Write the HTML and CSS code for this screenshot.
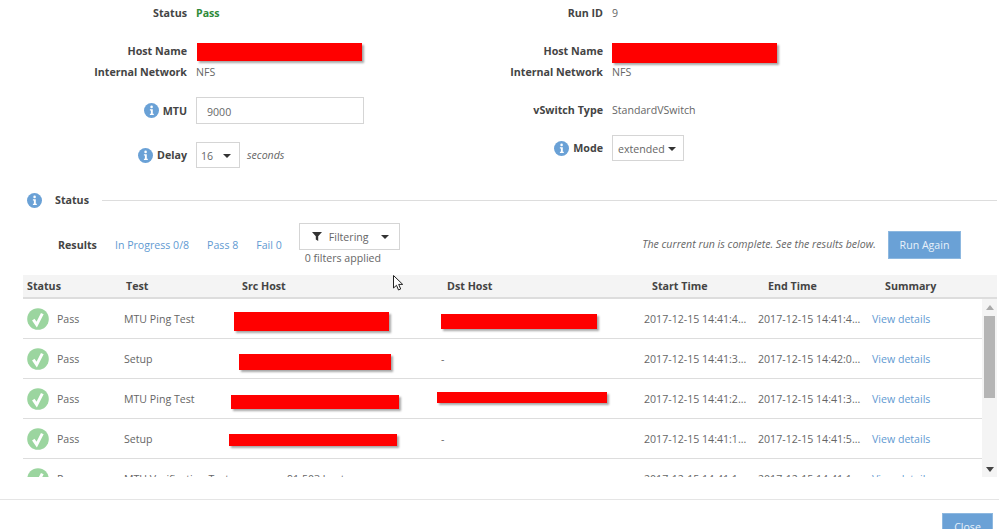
FILE: index.html
```html
<!DOCTYPE html>
<html lang="en">
<head>
<meta charset="utf-8">
<title>Run details</title>
<link rel="stylesheet" href="styles.css">
</head>
<body>
<svg class="defs" width="0" height="0" aria-hidden="true">
  <symbol id="info" viewBox="0 0 15 15"><circle cx="7.5" cy="7.5" r="7.5" fill="#6aa1d6"/><circle cx="7.6" cy="3.9" r="1.3" fill="#fff"/><path d="M5.9 6.2h2.9v4.6h1v1.2H5.9v-1.2h1V7.4h-1z" fill="#fff"/></symbol>
  <symbol id="ok" viewBox="0 0 22 22"><circle cx="11" cy="11" r="10.8" fill="#9bd59f"/><path d="M6.3 11.6l3.4 5 5.6-11" fill="none" stroke="#fff" stroke-width="3"/></symbol>
</svg>
<main class="page">
  <section class="form">
    <div class="col col-left">
      <div class="row"><span class="label">Status</span><span class="pass">Pass</span></div>
      <div class="row host"><span class="label">Host Name</span><span class="value"></span></div>
      <div class="row net"><span class="label">Internal Network</span><span class="value">NFS</span></div>
      <div class="row mtu"><span class="label"><svg class="i"><use href="#info"/></svg>MTU</span><span class="input">9000</span></div>
      <div class="row delay"><span class="label"><svg class="i"><use href="#info"/></svg>Delay</span><span class="select small">16<b class="caret"></b></span><em class="value unit">seconds</em></div>
    </div>
    <div class="col col-right">
      <div class="row"><span class="label">Run ID</span><span class="value">9</span></div>
      <div class="row host"><span class="label">Host Name</span><span class="value"></span></div>
      <div class="row net"><span class="label">Internal Network</span><span class="value">NFS</span></div>
      <div class="row type"><span class="label">vSwitch Type</span><span class="value">StandardVSwitch</span></div>
      <div class="row mode"><span class="label"><svg class="i"><use href="#info"/></svg>Mode</span><span class="select wide">extended<b class="caret tight"></b></span></div>
    </div>
  </section>

  <div class="section-head"><svg class="i"><use href="#info"/></svg><strong>Status</strong><span class="rule"></span></div>

  <div class="toolbar">
    <strong class="results">Results</strong>
    <a class="link">In Progress 0/8</a>
    <a class="link">Pass 8</a>
    <a class="link">Fail 0</a>
    <div class="filter">
      <button class="filter-btn"><svg class="funnel" viewBox="0 0 10 9"><path d="M0 0h10L6.2 4.2V9L3.8 7.6V4.2z" fill="#333"/></svg>Filtering<b class="caret"></b></button>
      <span class="filter-note">0 filters applied</span>
    </div>
    <em class="run-note">The current run is complete. See the results below.</em>
    <button class="run">Run Again</button>
  </div>

  <div class="thead">
    <span>Status</span><span>Test</span><span>Src Host</span><span>Dst Host</span><span>Start Time</span><span>End Time</span><span>Summary</span>
  </div>
  <div class="tbody">
    <div class="rows">
      <div class="tr"><svg class="ok"><use href="#ok"/></svg><span>Pass</span><span>MTU Ping Test</span><span></span><span></span><span>2017-12-15 14:41:4...</span><span>2017-12-15 14:41:4...</span><a class="link">View details</a></div>
      <div class="tr"><svg class="ok"><use href="#ok"/></svg><span>Pass</span><span>Setup</span><span></span><span>-</span><span>2017-12-15 14:41:3...</span><span>2017-12-15 14:42:0...</span><a class="link">View details</a></div>
      <div class="tr"><svg class="ok"><use href="#ok"/></svg><span>Pass</span><span>MTU Ping Test</span><span class="peek">91.503 host</span><span></span><span>2017-12-15 14:41:2...</span><span>2017-12-15 14:41:3...</span><a class="link">View details</a></div>
      <div class="tr"><svg class="ok"><use href="#ok"/></svg><span>Pass</span><span>Setup</span><span></span><span>-</span><span>2017-12-15 14:41:1...</span><span>2017-12-15 14:41:5...</span><a class="link">View details</a></div>
      <div class="tr"><svg class="ok"><use href="#ok"/></svg><span>Pass</span><span>MTU Verification Test</span><span class="peek">91.503 host</span><span></span><span>2017-12-15 14:41:1...</span><span>2017-12-15 14:41:1...</span><a class="link">View details</a></div>
    </div>
    <div class="scrollbar"><i class="arrow up"></i><i class="thumb"></i><i class="arrow down"></i></div>
  </div>

  <footer class="footer"><button class="run close">Close</button></footer>
</main>

<span class="redact r1"></span><span class="redact r2"></span><span class="redact r3"></span><span class="redact r4"></span><span class="redact r5"></span><span class="redact r6"></span><span class="redact r7"></span><span class="redact r8"></span>
<svg class="cursor" viewBox="0 0 11 16"><path d="M.5.5v12.5l3-2.7 2 4.7 2.2-1-2-4.6h4z" fill="#fff" stroke="#222"/></svg>
</body>
</html>
```
FILE: styles.css
```css
* { box-sizing: border-box; }
html, body { margin: 0; height: 529px; overflow: hidden; background: #fff; }
body { font: 10.6px/20px "Open Sans", sans-serif; color: #666; position: relative; }
.defs { position: absolute; }
.page { display: flex; flex-direction: column; width: 999px; height: 529px; overflow: hidden; }
strong, .label { font-size: 10.7px; font-weight: 700; color: #444; }

.form { display: flex; padding-top: 3px; flex: none; }
.col { display: flex; flex-direction: column; }
.col-left { width: 412px; }
.row { display: flex; align-items: center; gap: 9px; height: 20px; flex: none; }
.label { width: 187px; display: flex; justify-content: flex-end; align-items: center; gap: 4px; }
.col-right .label { width: 191px; }
.pass { color: #2e8b3a; font-weight: 700; }
.row.host { margin-top: 18px; }
.row.net { margin-top: 1px; }
.row.mtu { margin-top: 15px; height: 27px; }
.row.delay { margin-top: 18px; height: 26px; }
.row.type { margin-top: 18px; }
.row.mode { margin-top: 15px; height: 26px; }
.i { width: 15px; height: 15px; flex: none; }
.input { width: 168px; height: 27px; border: 1px solid #d5d5d5; padding: 4px 10px; }
.select { height: 26px; border: 1px solid #d5d5d5; display: flex; align-items: center; padding: 1px 4px 0; }
.small { width: 44px; justify-content: space-between; padding-right: 8px; }
.wide { width: 72px; gap: 3px; padding-left: 5px; }
.caret { width: 0; height: 0; border: 4px solid transparent; border-top: 4px solid #333; border-bottom: 0; flex: none; }
.unit { margin-left: -2px; }

.section-head { display: flex; align-items: center; height: 20px; margin-top: 22px; padding-left: 27px; flex: none; }
.section-head strong { margin-left: 13px; }
.rule { flex: 1; height: 1px; background: #ddd; margin: 0 2px 0 13px; }

.toolbar { display: flex; align-items: center; height: 44px; margin-top: 13px; margin-bottom: 8px; padding: 0 38px 0 58px; flex: none; }
.link { color: #5f9ad2; }
.results { margin-right: 18px; }
.toolbar .link { margin-right: 18px; }
.toolbar .link:nth-of-type(3) { margin-right: 17px; }
.filter { display: flex; flex-direction: column; width: 101px; }
button { font: inherit; cursor: pointer; }
.filter-btn { height: 27px; background: #fff; border: 1px solid #d5d5d5; display: flex; align-items: center; padding: 0 10px 0 12px; color: #666; }
.funnel { width: 10px; height: 9px; margin-right: 7px; }
.filter-btn .caret { margin-left: auto; }
.filter-note { height: 17px; line-height: 17px; padding-left: 6px; white-space: nowrap; }
.run-note { margin: 0 12px 2px auto; }
.run { width: 73px; height: 28px; padding: 0; background: #6aa1d6; border: 1px solid #8db8e0; color: #e8f1fa; }

.thead { display: grid; grid-template-columns: 99px 116px 205px 205px 116px 117px 1fr; height: 24px; margin: 0 2px 0 23px; padding-left: 4px; background: #f4f4f4; border-bottom: 2px solid #ddd; font-size: 10.7px; font-weight: 700; color: #444; align-items: center; flex: none; }
.tbody { display: flex; height: 178px; margin: 0 2px 0 23px; overflow: hidden; flex: none; }
.rows { flex: 1; min-width: 0; }
.tr { display: grid; grid-template-columns: 30px 67px 116px 201px 203px 114px 114px 1fr; align-items: center; height: 40px; padding-left: 4px; border-bottom: 1px solid #ddd; white-space: nowrap; }
.tr > span, .tr > a { padding-top: 1px; }
.ok { width: 22px; height: 22px; }
.tr > .peek { padding-left: 47px; }
.scrollbar { width: 15px; flex: none; background: #f4f4f4; display: flex; flex-direction: column; align-items: center; padding: 6px 0 5px; }
.thumb { width: 11px; height: 82px; margin-top: 6px; background: #b5b5b5; }
.arrow { width: 0; height: 0; border: 4px solid transparent; }
.up { border-bottom: 5px solid #aaa; border-top: 0; }
.down { border-top: 5px solid #444; border-bottom: 0; margin-top: auto; }

.footer { display: flex; justify-content: flex-end; height: 30px; flex: none; margin-top: 22px; border-top: 1px solid #e5e5e5; padding: 13px 6px 0 0; overflow: hidden; }
.close { width: 51px; flex: none; }

.redact { position: absolute; background: #f00; box-shadow: 2px 2px 2px rgba(0,0,0,.35); }
.r1 { left: 197px; top: 43px; width: 165px; height: 18px; }
.r2 { left: 612px; top: 43px; width: 165px; height: 20px; }
.r3 { left: 234px; top: 312px; width: 155px; height: 19px; }
.r4 { left: 441px; top: 314px; width: 156px; height: 15px; }
.r5 { left: 239px; top: 354px; width: 152px; height: 16px; }
.r6 { left: 231px; top: 395px; width: 168px; height: 14px; }
.r7 { left: 437px; top: 392px; width: 170px; height: 11px; }
.r8 { left: 229px; top: 434px; width: 168px; height: 12px; }
.cursor { position: absolute; left: 393px; top: 275px; width: 11px; height: 16px; }
```
